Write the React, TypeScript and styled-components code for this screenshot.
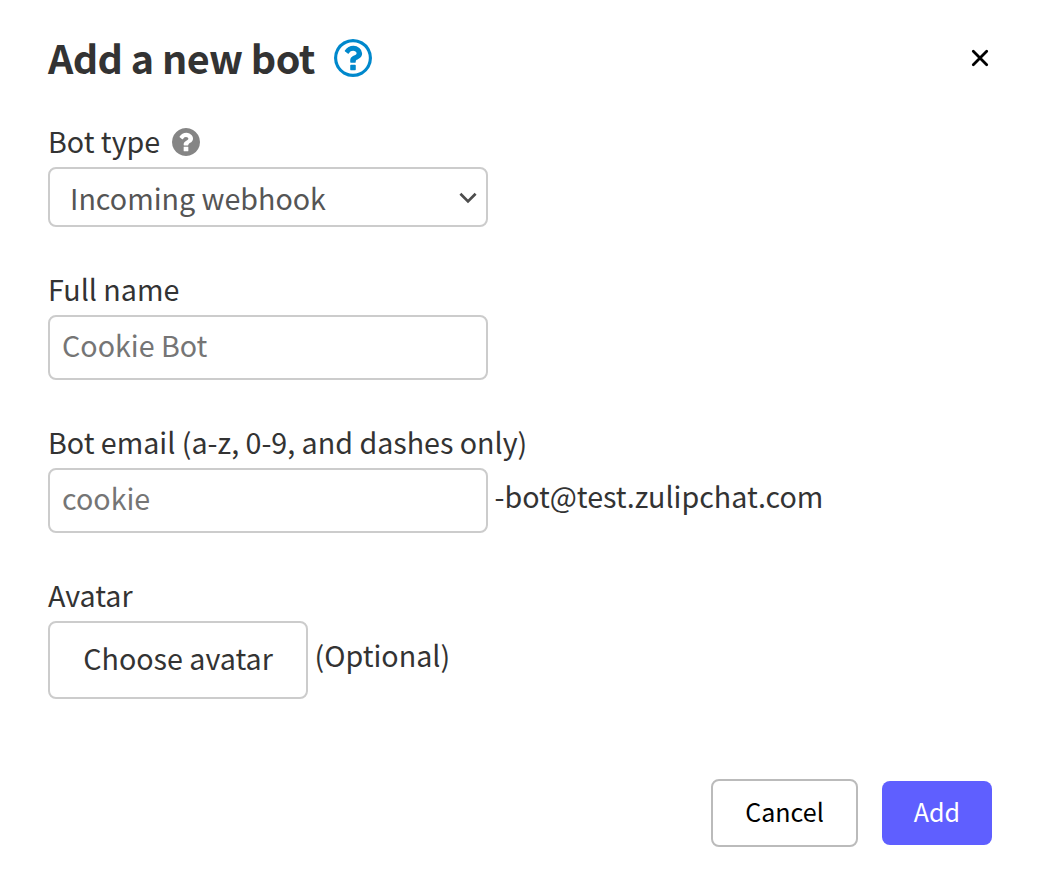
import React from "react";
import styled, { createGlobalStyle } from "styled-components";

const font = `"Noto Sans CJK SC", "Noto Sans", sans-serif`;

const GlobalStyle = createGlobalStyle`
  *, *::before, *::after { box-sizing: border-box; }
  body {
    margin: 0;
    background: #fff;
    color: #333;
    font-family: ${font};
    font-size: 28.65px;
  }
`;

const Dialog = styled.div`
  display: flex;
  flex-direction: column;
  width: 1040px;
  height: 886px;
  padding: 27px 48px 39px;
  background: #fff;
`;

const Header = styled.header`
  display: flex;
  align-items: center;
  height: 60px;
`;

const Title = styled.h1`
  margin: 0;
  font-size: 39.5px;
  font-weight: 700;
  letter-spacing: -0.58px;
  line-height: 60px;
  white-space: nowrap;
`;

const HelpLink = styled.a`
  display: flex;
  margin: 2.6px 0 0 19.3px;
  color: #0088cc;
`;

const CloseButton = styled.button`
  display: flex;
  margin: 2px 3px 0 auto;
  padding: 0;
  border: 0;
  background: none;
  color: #000;
`;

const Form = styled.form`
  display: flex;
  flex-direction: column;
  gap: 42px;
  margin-top: 34px;
`;

const Field = styled.div`
  display: flex;
  flex-direction: column;
`;

const Label = styled.label`
  display: flex;
  align-items: center;
  height: 40px;
  margin-bottom: 6px;
  line-height: 40px;
  white-space: nowrap;
`;

const LabelHelp = styled.span`
  display: flex;
  margin: 1px 0 0 12px;
  color: #858585;
`;

const ControlRow = styled.div`
  display: flex;
  align-items: center;
`;

const SelectWrap = styled.div`
  display: grid;
  align-items: center;
  width: 440px;
  height: 60px;

  > * { grid-area: 1 / 1; }
`;

const Select = styled.select`
  appearance: none;
  width: 440px;
  height: 60px;
  padding: 1px 40px 0 20px;
  border: 2px solid #ccc;
  border-radius: 8px;
  background: #fff;
  color: #555;
  font: 28.65px ${font};
`;

const Chevron = styled.svg`
  justify-self: end;
  margin: 2px 10px 0 0;
  pointer-events: none;
`;

const TextInput = styled.input`
  width: 440px;
  height: 65px;
  padding: 0 12px 7px;
  border: 2px solid #ccc;
  border-radius: 8px;
  background: #fff;
  color: #555;
  font: 28.65px ${font};

  &::placeholder { color: #757575; opacity: 1; }
`;

const Suffix = styled.span<{ $lift?: number }>`
  margin-left: 6.5px;
  padding-bottom: ${({ $lift = 9 }) => $lift}px;
  line-height: 40px;
  white-space: nowrap;
`;

const Button = styled.button<{ $kind: "file" | "outline" | "primary" }>`
  flex: none;
  border-radius: 8px;
  font-family: ${font};
  white-space: nowrap;
  ${({ $kind }) =>
    $kind === "file"
      ? "width: 260px; height: 78px; padding: 0 0 6px; border: 2px solid #ccc; background: #fff; color: #333; font-size: 28.65px;"
      : $kind === "outline"
      ? "width: 147px; height: 68px; padding: 0 0 5px; border: 2px solid #bbb; background: #fff; color: #000; font-size: 25.05px;"
      : "width: 110px; height: 64px; padding: 0 0 5px; border: 0; background: #5f5fff; color: #fff; font-size: 25.05px;"}
`;

const Footer = styled.footer`
  display: flex;
  align-items: center;
  justify-content: flex-end;
  gap: 24px;
  margin-top: auto;
`;

const HelpOutline = () => (
  <svg width="38" height="38" viewBox="128 128 1536 1536" fill="currentColor">
    <path d="M1008 1200v160q0 14-9 23t-23 9h-160q-14 0-23-9t-9-23v-160q0-14 9-23t23-9h160q14 0 23 9t9 23zm256-496q0 50-15 90t-45.5 69-52 44-59.5 36q-32 18-46.5 28t-26 24-11.5 29v32q0 14-9 23t-23 9h-160q-14 0-23-9t-9-23v-68q0-35 10.5-64.5t24-47.5 39-35.5 41-25.5 44.5-21q53-25 75-43t22-49q0-42-43.5-71.5t-95.5-29.5q-56 0-95 27-29 20-80 83-9 12-25 12-11 0-19-6l-108-82q-10-7-12-20t5-23q122-192 349-192 129 0 238.5 89.5t109.5 214.5zm-368-448q-130 0-248.5 51t-204 136.5-136.5 204-51 248.5 51 248.5 136.5 204 204 136.5 248.5 51 248.5-51 204-136.5 136.5-204 51-248.5-51-248.5-136.5-204-204-136.5-248.5-51zm768 640q0 209-103 385.5t-279.5 279.5-385.5 103-385.5-103-279.5-279.5-103-385.5 103-385.5 279.5-279.5 385.5-103 385.5 103 279.5 279.5 103 385.5z" />
  </svg>
);

const HelpSolid = () => (
  <svg width="28" height="28" viewBox="128 128 1536 1536" fill="currentColor">
    <path d="M1024 1376v-192q0-14-9-23t-23-9h-192q-14 0-23 9t-9 23v192q0 14 9 23t23 9h192q14 0 23-9t9-23zm256-672q0-88-55.5-163t-138.5-116-170-41q-243 0-371 213-15 24 8 42l132 100q7 6 19 6 16 0 25-12 53-68 86-92 34-24 86-24 48 0 85.5 26t37.5 59q0 38-20 61t-68 45q-63 28-115.5 86.5t-52.5 125.5v36q0 14 9 23t23 9h192q14 0 23-9t9-23q0-19 21.5-49.5t54.5-49.5q32-18 49-28.5t46-35 44.5-48 28-60.5 12.5-81zm384 192q0 209-103 385.5t-279.5 279.5-385.5 103-385.5-103-279.5-279.5-103-385.5 103-385.5 279.5-279.5 385.5-103 385.5 103 279.5 279.5 103 385.5z" />
  </svg>
);

export default function App() {
  return (
    <>
      <GlobalStyle />
      <Dialog role="dialog" aria-labelledby="dialog-title">
        <Header>
          <Title id="dialog-title">Add a new bot</Title>
          <HelpLink aria-label="Help">
            <HelpOutline />
          </HelpLink>
          <CloseButton aria-label="Close">
            <svg width="18" height="18" viewBox="0 0 18 18" fill="none" stroke="currentColor" strokeWidth="2.8" strokeLinecap="round">
              <path d="M2.3 2.3 15.7 15.7M15.7 2.3 2.3 15.7" />
            </svg>
          </CloseButton>
        </Header>
        <Form>
          <Field>
            <Label htmlFor="bot-type">
              Bot type
              <LabelHelp>
                <HelpSolid />
              </LabelHelp>
            </Label>
            <SelectWrap>
              <Select id="bot-type" defaultValue="incoming">
                <option value="incoming">Incoming webhook</option>
              </Select>
              <Chevron width="20" height="14" viewBox="0 0 20 14" fill="none" stroke="#4d4d4d" strokeWidth="2.7">
                <path d="M2.4 2.7 10 10.4 17.6 2.7" />
              </Chevron>
            </SelectWrap>
          </Field>
          <Field>
            <Label htmlFor="full-name">Full name</Label>
            <TextInput id="full-name" placeholder="Cookie Bot" />
          </Field>
          <Field>
            <Label htmlFor="bot-email">Bot email (a-z, 0-9, and dashes only)</Label>
            <ControlRow>
              <TextInput id="bot-email" placeholder="cookie" />
              <Suffix>-bot@test.zulipchat.com</Suffix>
            </ControlRow>
          </Field>
          <Field>
            <Label>Avatar</Label>
            <ControlRow>
              <Button type="button" $kind="file">Choose avatar</Button>
              <Suffix $lift={11}>(Optional)</Suffix>
            </ControlRow>
          </Field>
        </Form>
        <Footer>
          <Button type="button" $kind="outline">Cancel</Button>
          <Button type="button" $kind="primary">Add</Button>
        </Footer>
      </Dialog>
    </>
  );
}
